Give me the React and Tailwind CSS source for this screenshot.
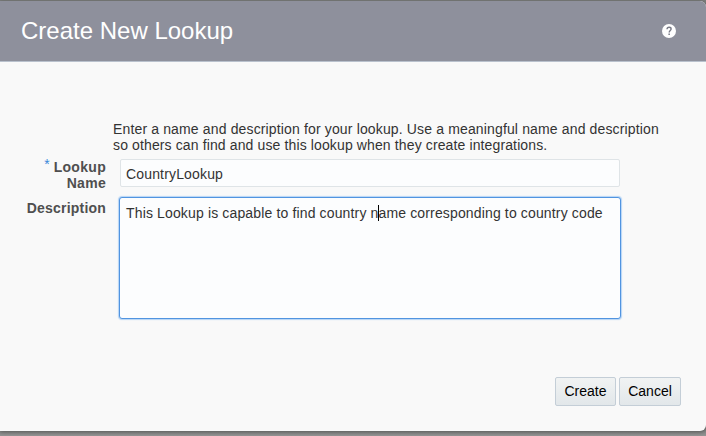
function HelpIcon() {
  return (
    <svg width="14" height="14" viewBox="0 0 14 14" fill="none" aria-label="Help">
      <circle cx="7" cy="7" r="7" fill="#fff" />
      <path d="M5 5.2C5.1 3.9 5.9 3.3 7.1 3.3C8.3 3.3 9.1 4 9.1 5C9.1 6.5 7.2 6.5 7.2 8.4" stroke="#777985" strokeWidth="1.4" />
      <path d="M6.4 9.6h1.5v1.5H6.4z" fill="#777985" />
    </svg>
  );
}

function DialogButton({ children, className }) {
  return (
    <button
      type="button"
      className={`h-[29px] rounded-[2px] border border-[#c4ced7] bg-gradient-to-b from-[#f1f3f3] to-[#e2e7ea] text-center text-[14px] leading-[27px] text-black ${className}`}
    >
      {children}
    </button>
  );
}

export default function App() {
  return (
    <div className="h-[436px] w-[706px] overflow-hidden bg-gradient-to-b from-[#7b7d7b] from-98% to-[#949494] pt-px font-['Liberation_Sans',Arial,sans-serif] text-[14px] leading-4 text-[#333]">
      <div className="flex h-[430px] flex-col rounded-r-[6px] bg-[#f9f9f9] shadow-[0_1px_4px_rgba(0,0,0,0.35)]">
        <header className="flex h-[61px] shrink-0 items-center justify-between rounded-tr-[6px] border-b border-[#b9c1cd] bg-[#8e909c] pr-[30px] pl-[21px]">
          <h1 className="text-[24px] leading-[30px] text-white">Create New Lookup</h1>
          <HelpIcon />
        </header>

        <main className="pt-[59px]">
          <p className="pl-[113px] tracking-[0.145px] whitespace-nowrap">
            Enter a name and description for your lookup. Use a meaningful name and description
            <br />
            <span className="tracking-[0.125px]">so others can find and use this lookup when they create integrations.</span>
          </p>

          <div className="mt-[6px] flex h-8 gap-[14px]">
            <div className="flex w-[106px] justify-end font-bold text-[#4f4f4f]">
              <span className="mr-[4px] text-[14px] leading-[11px] font-normal text-[#3a87d9]">*</span>
              <label className="text-right tracking-[0.3px]">
                Lookup
                <br />
                Name
              </label>
            </div>
            <div className="h-7 w-[500px] rounded-[2px] border border-[#dfe4e7] bg-[#fcfdfe] pt-[6px] pl-[5px] tracking-[0.16px]">
              CountryLookup
            </div>
          </div>

          <div className="mt-[6px] flex gap-[13px]">
            <label className="w-[106px] pt-[3px] text-right font-bold tracking-[0.2px] text-[#4f4f4f]">Description</label>
            <div className="h-[122px] w-[502px] rounded-[3px] border border-[#5194e0] bg-[#fcfdfe] pt-[7px] pl-[6px] tracking-[0.145px] whitespace-nowrap shadow-[0_0_1px_1px_#b5d4f5]">
              This Lookup is capable to find country n
              <span className="relative">
                <span className="absolute top-0 -left-px h-[16px] w-px bg-black" />
              </span>
              ame corresponding to country code
            </div>
          </div>
        </main>

        <footer className="mt-auto flex justify-end gap-[3px] pr-[25px] pb-[25px]">
          <DialogButton className="w-[61px]">Create</DialogButton>
          <DialogButton className="w-[62px]">Cancel</DialogButton>
        </footer>
      </div>
    </div>
  );
}
